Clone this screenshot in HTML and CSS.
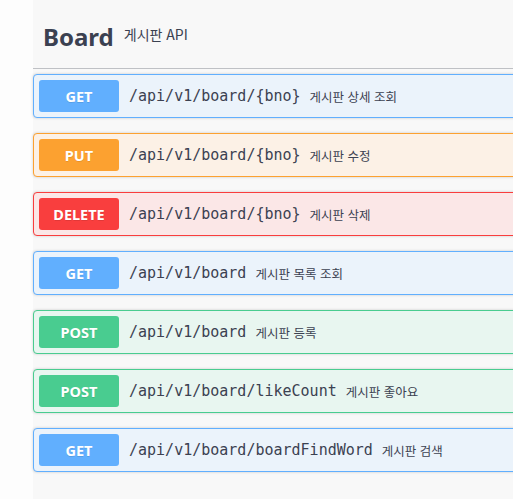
FILE: index.html
```html
<!DOCTYPE html>
<html lang="ko">
<head>
<meta charset="utf-8">
<title>Board</title>
<link rel="stylesheet" href="styles.css">
</head>
<body>
<div class="page">
  <div class="section">
    <h3 class="tag"><span class="tag-name">Board</span><small class="tag-desc">게시판 API</small></h3>
    <div class="ops">
      <div class="op get"><span class="method">GET</span><span class="path">/api/v1/board/{bno}</span><span class="desc">게시판 상세 조회</span></div>
      <div class="op put"><span class="method">PUT</span><span class="path">/api/v1/board/{bno}</span><span class="desc">게시판 수정</span></div>
      <div class="op delete"><span class="method">DELETE</span><span class="path">/api/v1/board/{bno}</span><span class="desc">게시판 삭제</span></div>
      <div class="op get"><span class="method">GET</span><span class="path">/api/v1/board</span><span class="desc">게시판 목록 조회</span></div>
      <div class="op post"><span class="method">POST</span><span class="path">/api/v1/board</span><span class="desc">게시판 등록</span></div>
      <div class="op post"><span class="method">POST</span><span class="path">/api/v1/board/likeCount</span><span class="desc">게시판 좋아요</span></div>
      <div class="op get"><span class="method">GET</span><span class="path">/api/v1/board/boardFindWord</span><span class="desc">게시판 검색</span></div>
    </div>
  </div>
</div>
</body>
</html>
```
FILE: styles.css
```css
html, body {
  margin: 0;
  padding: 0;
  background: #fdfdfd;
  overflow: hidden;
}
.page {
  padding-left: 33px;
  width: 600px;
}
.section {
  background: #f8f8f8;
  padding-bottom: 30px;
}
.tag {
  margin: 0 0 5px 0;
  height: 68px;
  display: flex;
  align-items: center;
  padding: 0 0 0 10px;
  border-bottom: 1px solid rgba(59, 65, 81, 0.3);
  color: #3b4151;
  font-family: "Noto Sans", "Noto Sans CJK KR", sans-serif;
}
.tag-name {
  font-size: 24px;
  font-weight: 700;
  margin-top: 4px;
}
.tag-desc {
  font-size: 14px;
  font-weight: 400;
  padding: 0 10px;
  font-family: "Noto Sans CJK KR", sans-serif;
}
.ops {
  display: flex;
  flex-direction: column;
  gap: 15px;
}
.op {
  display: flex;
  align-items: center;
  padding: 5px;
  border: 1px solid;
  border-radius: 4px;
  box-shadow: 0 0 3px rgba(0, 0, 0, 0.19);
}
.method {
  width: 80px;
  height: 32px;
  display: flex;
  align-items: center;
  justify-content: center;
  border-radius: 3px;
  color: #fff;
  font-family: "Noto Sans", sans-serif;
  font-weight: 700;
  font-size: 14.5px;
  text-shadow: 0 1px 0 rgba(0, 0, 0, 0.1);
}
.path {
  padding: 0 10px;
  font-family: "DejaVu Sans Mono", monospace;
  font-size: 15px;
  font-weight: 400;
  color: #3b4151;
}
.desc {
  font-family: "Noto Sans CJK KR", sans-serif;
  font-size: 12.5px;
  color: #3b4151;
  margin-left: -1px;
}
.get { border-color: #61affe; background: #ebf3fb; }
.get .method { background: #61affe; }
.put { border-color: #fca130; background: #fcf1e6; }
.put .method { background: #fca130; }
.delete { border-color: #f93e3e; background: #fbe7e7; }
.delete .method { background: #f93e3e; }
.post { border-color: #49cc90; background: #e8f6f0; }
.post .method { background: #49cc90; }
```
